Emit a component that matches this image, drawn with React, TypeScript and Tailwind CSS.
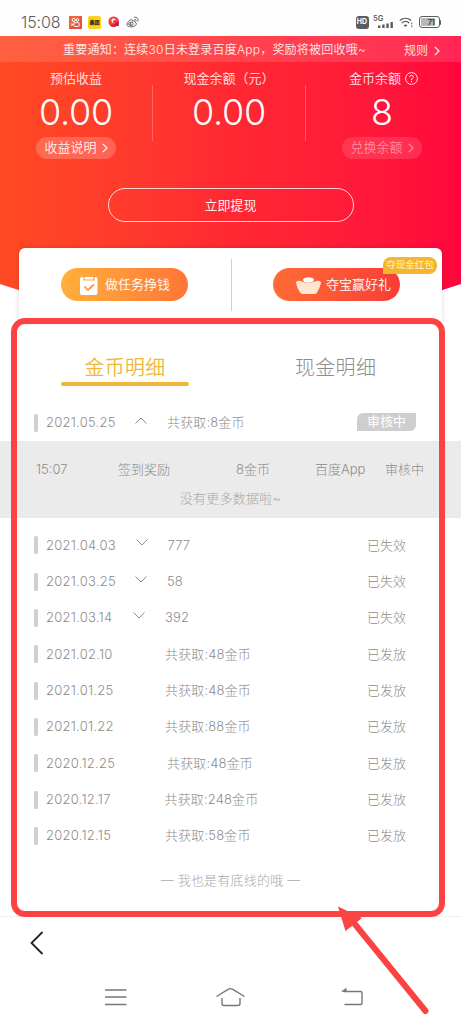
import clsx from "clsx";

interface RecordItem {
  date: string;
  value: string;
  status: string;
  dateWidth: string;
  arrow?: "up" | "down";
}

const records: RecordItem[] = [
  { date: "2021.04.03", value: "777", status: "已失效", dateWidth: "w-[121.5px]", arrow: "down" },
  { date: "2021.03.25", value: "58", status: "已失效", dateWidth: "w-[121px]", arrow: "down" },
  { date: "2021.03.14", value: "392", status: "已失效", dateWidth: "w-[119px]", arrow: "down" },
  { date: "2021.02.10", value: "共获取:48金币", status: "已发放", dateWidth: "w-[119px]" },
  { date: "2021.01.25", value: "共获取:48金币", status: "已发放", dateWidth: "w-[119px]" },
  { date: "2021.01.22", value: "共获取:88金币", status: "已发放", dateWidth: "w-[119px]" },
  { date: "2020.12.25", value: "共获取:48金币", status: "已发放", dateWidth: "w-[121px]" },
  { date: "2020.12.17", value: "共获取:248金币", status: "已发放", dateWidth: "w-[118.5px]" },
  { date: "2020.12.15", value: "共获取:58金币", status: "已发放", dateWidth: "w-[119px]" },
];

const Chevron = ({ className }: { className?: string }) => (
  <svg className={className} viewBox="0 0 6 10" fill="none" stroke="currentColor" strokeWidth="1.2">
    <path d="M0.8 0.8 5 5 0.8 9.2" />
  </svg>
);

const StatusBar = () => (
  <div className="flex h-9 items-center bg-[#fefefe] pl-[21px] pr-[20px] pt-[8px]">
    <span className="w-12 font-['Inter'] text-[16px] leading-5 tracking-[-0.100px] text-[#5c5c5c]">
      15:08
    </span>
    <svg className="h-[13px] w-[13px]" viewBox="0 0 13 13" fill="none">
      <rect width="13" height="13" fill="#e8503c" />
      <path d="M0 0h13L0 13z" fill="#f0763c" opacity=".6" />
      <circle cx="4.8" cy="4" r="1.6" stroke="#fff" />
      <circle cx="8.5" cy="4" r="1.3" stroke="#fff" />
      <rect x="4.8" y="6.7" width="5.4" height="3.7" rx="1" stroke="#fff" />
      <path d="M2.5 7v3l2-1.5z" fill="#fff" />
    </svg>
    <span className="ml-[6px] flex h-[13px] w-[13px] items-center justify-center overflow-hidden rounded-[2px] bg-[#fbd21c] font-['Noto_Sans_CJK_SC'] text-[5px] font-black text-[#2a2410]">
      美团
    </span>
    <svg className="ml-[7px] h-[12px] w-[12px]" viewBox="0 0 12 12">
      <circle cx="5.7" cy="5.7" r="5.2" fill="#dd1747" />
      <path d="M.8 3.500C3 0 9 0 10.500 4L7 8 2 9z" fill="#f04a3c" />
      <path d="M8 9l3-2.500-.5 4z" fill="#7d1c6a" />
      <circle cx="5.600" cy="4.800" r="2.200" fill="#fff4ea" />
      <circle cx="6.700" cy="5.600" r="1.700" fill="#ee3340" />
    </svg>
    <svg className="ml-[6px] h-[12px] w-[13px]" viewBox="0 0 13 12" fill="none" stroke="#5f5f5f">
      <path d="M9.2 6.2c1.6.5 1.4 2.4 0 3.4-2.300 1.800-7.400 1.600-8.200-.6C.4 7 3.800 3.600 5.500 3.600c.9 0 .9.800.7 1.500 1.300-.6 2.900-.4 3 1.100z" />
      <ellipse cx="4.900" cy="7.800" rx="2.200" ry="1.700" />
      <circle cx="4.600" cy="8" r=".5" fill="#5f5f5f" />
      <path d="M8.300 3.400c1.200-.2 2.100.7 1.800 1.900M8.300 1.200c2.500-.4 4.400 1.700 3.700 4.100" />
    </svg>

    <span className="ml-auto flex h-[13px] w-[13px] items-center justify-center rounded-[3px] bg-[#5c5c5c] font-['Inter'] text-[7px] font-bold text-white">
      HD
    </span>
    <svg className="ml-[4px] h-[14px] w-[22px]" viewBox="0 0 22 14" fill="#5c5c5c">
      <text x="0" y="5.800" fontSize="7.500" fontFamily="Inter" fontWeight="600">
        5G
      </text>
      <path d="M5 10.500h2.400V13H5zM9.200 9.500h2.400V13H9.200zM13.300 8.500h2.400V13h-2.400zM17.500 7h2.400v6h-2.400z" />
    </svg>
    <svg className="ml-[4px] mt-px h-[11px] w-[14px]" viewBox="0 0 14 11" fill="none" stroke="#5c5c5c" strokeWidth="1.400">
      <path d="M.8 3.600c3.400-3 8-3 11.400 0M2.800 6c2.300-2 5.200-2 7.400 0" />
      <path d="M4.600 8.200c1.300-1 2.500-1 3.800 0L6.500 10z" fill="#5c5c5c" stroke="none" />
      <path d="M12.800 5.500v2M12.800 8.500v1.700" strokeWidth="1" />
    </svg>
    <div className="ml-[6px] flex h-[12px] w-[21px] items-center rounded-[3px] border border-[#5c5c5c] p-px">
      <span className="flex h-full w-[14px] items-center justify-end bg-[#b9b9b9] font-['Inter'] text-[8px] font-bold leading-none tracking-[-0.5px] text-[#4a4a4a]">
        71
      </span>
    </div>
    <span className="h-[5px] w-[1.500px] rounded-r bg-[#5c5c5c]" />
  </div>
);

const Hero = () => (
  <div className="h-[256px] bg-linear-to-r from-[#ff4a23] via-[#ff2832] to-[#ff053d] text-white [clip-path:polygon(0_0,100%_0,100%_248px,96%_254px,50%_256px,4%_254px,0_248px)]">
    <div className="flex h-[26px] items-center bg-white/13 pl-[63px] pt-px text-[12px] text-white/90">
      <span className="whitespace-nowrap tracking-[0.220px]">
        重要通知：连续30日未登录百度App，奖励将被回收哦~
      </span>
      <span className="ml-auto mr-[6px] mt-[3px]">规则</span>
      <Chevron className="mr-[21px] mt-[2px] h-[10px] w-[6px]" />
    </div>

    <div className="grid h-[97px] grid-cols-[152px_154px_1fr] pt-[7px]">
      <div className="flex flex-col items-center">
        <span className="text-[13px] leading-[19px] text-white/90">预估收益</span>
        <span className="mt-[5px] font-['Inter'] text-[36px] font-light leading-[38px] tracking-[-0.300px]">0.00</span>
        <span className="mt-[6px] flex h-[22px] w-[80px] items-center justify-center rounded-full bg-white/20 text-[13px] text-white/95">
          收益说明
          <Chevron className="ml-[5px] h-[10px] w-[6px]" />
        </span>
      </div>
      <div className="mt-[16px] flex h-[56px] flex-col items-center border-x border-white/25">
        <span className="mt-[-16px] text-[13px] leading-[19px] text-white/90">现金余额（元）</span>
        <span className="mt-[5px] font-['Inter'] text-[36px] font-light leading-[38px] tracking-[-0.300px]">0.00</span>
      </div>
      <div className="flex flex-col items-center">
        <span className="flex items-center text-[13px] leading-[19px] text-white/90">
          金币余额
          <svg className="ml-[4px] h-[13px] w-[13px]" viewBox="0 0 13 13" fill="none" stroke="currentColor">
            <circle cx="6.500" cy="6.500" r="5.900" />
            <path d="M4.700 5c.1-2.400 3.700-2.300 3.600-.1C8.200 6.200 6.500 6.200 6.500 8M6.500 9v1.200" />
          </svg>
        </span>
        <span className="mt-[5px] mr-[3px] font-['Inter'] text-[36px] font-light leading-[38px]">8</span>
        <span className="mt-[6px] mr-[3px] flex h-[22px] w-[80px] items-center justify-center rounded-full bg-white/12 text-[13px] text-white/45">
          兑换余额
          <Chevron className="ml-[5px] h-[10px] w-[6px]" />
        </span>
      </div>
    </div>

    <div className="mx-auto mt-[29px] flex h-[34px] w-[246px] items-center justify-center rounded-full border border-white/80 pt-px text-[13px]">
      立即提现
    </div>
  </div>
);

const ActionCard = () => (
  <div className="relative mx-[19px] mt-[-44px] flex h-[74px] rounded-t-[6px] bg-white shadow-[0_0_5px_rgba(0,0,0,0.15)]">
    <div className="flex w-1/2 pl-[42px] pt-[20px]">
      <div className="flex h-[33px] w-[127px] items-center rounded-full bg-linear-to-r from-[#ffb03c] to-[#ff7438] pl-[19px] pt-px text-[13px] text-white">
        <svg className="mr-[7px] h-[19px] w-[18px]" viewBox="0 0 18 19" fill="none">
          <rect y="1" width="17.500" height="18" rx="2" fill="#fff" />
          <path d="M4 0v4h10V0" stroke="#ff9f3b" strokeWidth="1.200" />
          <path d="m4.500 10.500 3.500 3.500 6-5.500" stroke="#ff963b" strokeWidth="1.700" />
        </svg>
        做任务挣钱
      </div>
    </div>
    <div className="mt-[11px] h-[52px] w-[1.500px] bg-[#cfcfcf]" />
    <div className="flex flex-1 pl-[41px] pt-[20px]">
      <div className="relative flex h-[33px] w-[127px] items-center rounded-full bg-linear-to-r from-[#ff6b35] to-[#f83c36] pl-[23px] pt-px text-[13px] text-white">
        <svg className="mr-[5px] h-[17px] w-[25px] shrink-0" viewBox="0 0 25 17">
          <ellipse cx="12.500" cy="3" rx="5.500" ry="2.700" fill="#fff" />
          <path d="M0 5c2-2 4-1.500 6-.5 4 1.800 9 1.800 13 0 2-1 4-1.500 6 .5-.5 4-2 7-4 10.500-1 1.500-2 1.500-4 1.500H8c-2 0-3 0-4-1.500C2 12 .5 9 0 5z" fill="#ffe7cd" />
        </svg>
        <span className="whitespace-nowrap">夺宝赢好礼</span>
        <span className="absolute left-[110px] top-[-11px] flex h-[17px] w-[54px] items-center justify-center whitespace-nowrap rounded-t-[8px] rounded-br-[8px] bg-[#f5b62b] text-[9.500px] text-white/95">
          夺现金红包
        </span>
      </div>
    </div>
  </div>
);

const Arrow = ({ up }: { up?: boolean }) => (
  <svg
    className={clsx("ml-auto mr-[20px] mt-[-5px] h-[7px] w-[12px]", up && "rotate-180")}
    viewBox="0 0 12 7"
    fill="none"
    stroke="#8c8c8c"
  >
    <path d="m.5.500 5.500 5.500L11.500.500" />
  </svg>
);

const Row = ({ date, value, status, dateWidth, arrow }: RecordItem) => (
  <div className="flex h-[36.330px] items-center pl-[34px] text-[13px] text-[#8c8c8c]">
    <span className="mr-2 h-[18px] w-1 rounded-[1.500px] bg-[#d0d0d0]" />
    <span className={clsx("flex items-center", dateWidth)}>
      <span className="tracking-[0.250px]">{date}</span>
      {arrow && <Arrow up={arrow === "up"} />}
    </span>
    <span className="flex-1 tracking-[0.150px]">{value}</span>
    {arrow === "up" ? (
      <span className="mb-[3px] mr-[45px] flex h-[18px] w-[59px] items-center justify-center rounded-tl-[6px] rounded-br-[6px] bg-[#cecece] pt-px font-normal text-white">
        {status}
      </span>
    ) : (
      <span className="mr-[55px]">{status}</span>
    )}
  </div>
);

const Details = () => (
  <div className="h-[594px] font-light text-[#8c8c8c]">
    <div className="flex pl-[61px] pt-[31px] text-[20px] leading-[30px] tracking-[0.300px]">
      <div className="h-[34px] w-[128px] text-center font-[350] text-[#f0b73a]">
        金币明细
        <div className="mt-[-1px] h-[4px] rounded-full bg-[#f0b73a]" />
      </div>
      <div className="ml-[106px]">现金明细</div>
    </div>

    <div className="mt-[18px]">
      <Row date="2021.05.25" value="共获取:8金币" status="审核中" dateWidth="w-[121px]" arrow="up" />
    </div>
    <div className="h-[77px] bg-[#ebebeb] pt-[18px] text-[13px] leading-[20px]">
      <div className="grid grid-cols-[82px_118px_79px_70px_1fr] pl-[36px]">
        <span>15:07</span>
        <span>签到奖励</span>
        <span>8金币</span>
        <span>百度App</span>
        <span>审核中</span>
      </div>
      <p className="mt-[9px] text-center tracking-[0.250px] text-[#a8a8a8]">没有更多数据啦~</p>
    </div>
    <div className="mt-[9px]">
      {records.map((item) => (
        <Row key={item.date} {...item} />
      ))}
    </div>
    <p className="mt-[16px] text-center text-[13px] leading-[20px] tracking-[0.200px] text-[#a8a8a8]">
      — 我也是有底线的哦 —
    </p>
  </div>
);

const BottomNav = () => (
  <div className="h-[108px] border-t border-[#f3eeee]">
    <svg className="ml-[30px] mt-[14px] h-[24px] w-[14px]" viewBox="0 0 14 24" fill="none" stroke="#222" strokeWidth="1.800">
      <path d="M12.500 1 1.500 12l11 11" />
    </svg>
    <div className="mt-[32px] flex h-[20px] items-center text-[#777]">
      <svg className="ml-[105px] h-[20px] w-[22px]" viewBox="0 0 22 20" fill="none" stroke="currentColor" strokeWidth="1.500">
        <path d="M0 3h21.500M0 10h21.500M0 17.500h21.500" />
      </svg>
      <svg className="ml-[88px] h-[20px] w-[32px]" viewBox="0 0 32 20" fill="none" stroke="currentColor" strokeWidth="1.400">
        <path d="M1.500 9.500 13.500 2.200c1.600-.9 2.400-.9 4 0l12 7.300M7 11v5.500q0 2 2 2h14q2 0 2-2V11" />
      </svg>
      <svg className="ml-[94px] h-[20px] w-[22px]" viewBox="0 0 22 20" fill="none" stroke="currentColor" strokeWidth="1.400">
        <path d="M3 4.500h16.500q1.500 0 1.500 1.500v10q0 1.500-1.500 1.500H3.500" />
        <path d="M0 4.500 5.500.8v4.400z" fill="currentColor" stroke="none" />
      </svg>
    </div>
  </div>
);

// red frame and arrow drawn on top of the page
const Highlight = () => (
  <>
    <div className="pointer-events-none absolute left-[11px] top-[318px] h-[599px] w-[434px] rounded-[14px] border-[6px] border-[#fc4344]" />
    <svg className="pointer-events-none absolute left-[330px] top-[900px] h-[120px] w-[105px]" viewBox="0 0 105 120">
      <path d="M24 23 95.500 111" stroke="#fc4344" strokeWidth="6" strokeLinecap="round" />
      <path d="M8 6.500 32 18 15.500 31z" fill="#fc4344" />
    </svg>
  </>
);

const App = () => (
  <div className="relative h-[1024px] w-[461px] overflow-hidden bg-white font-['Inter','Noto_Sans_CJK_SC',sans-serif] font-[350]">
    <StatusBar />
    <Hero />
    <ActionCard />
    <Details />
    <BottomNav />
    <Highlight />
  </div>
);

export default App;
